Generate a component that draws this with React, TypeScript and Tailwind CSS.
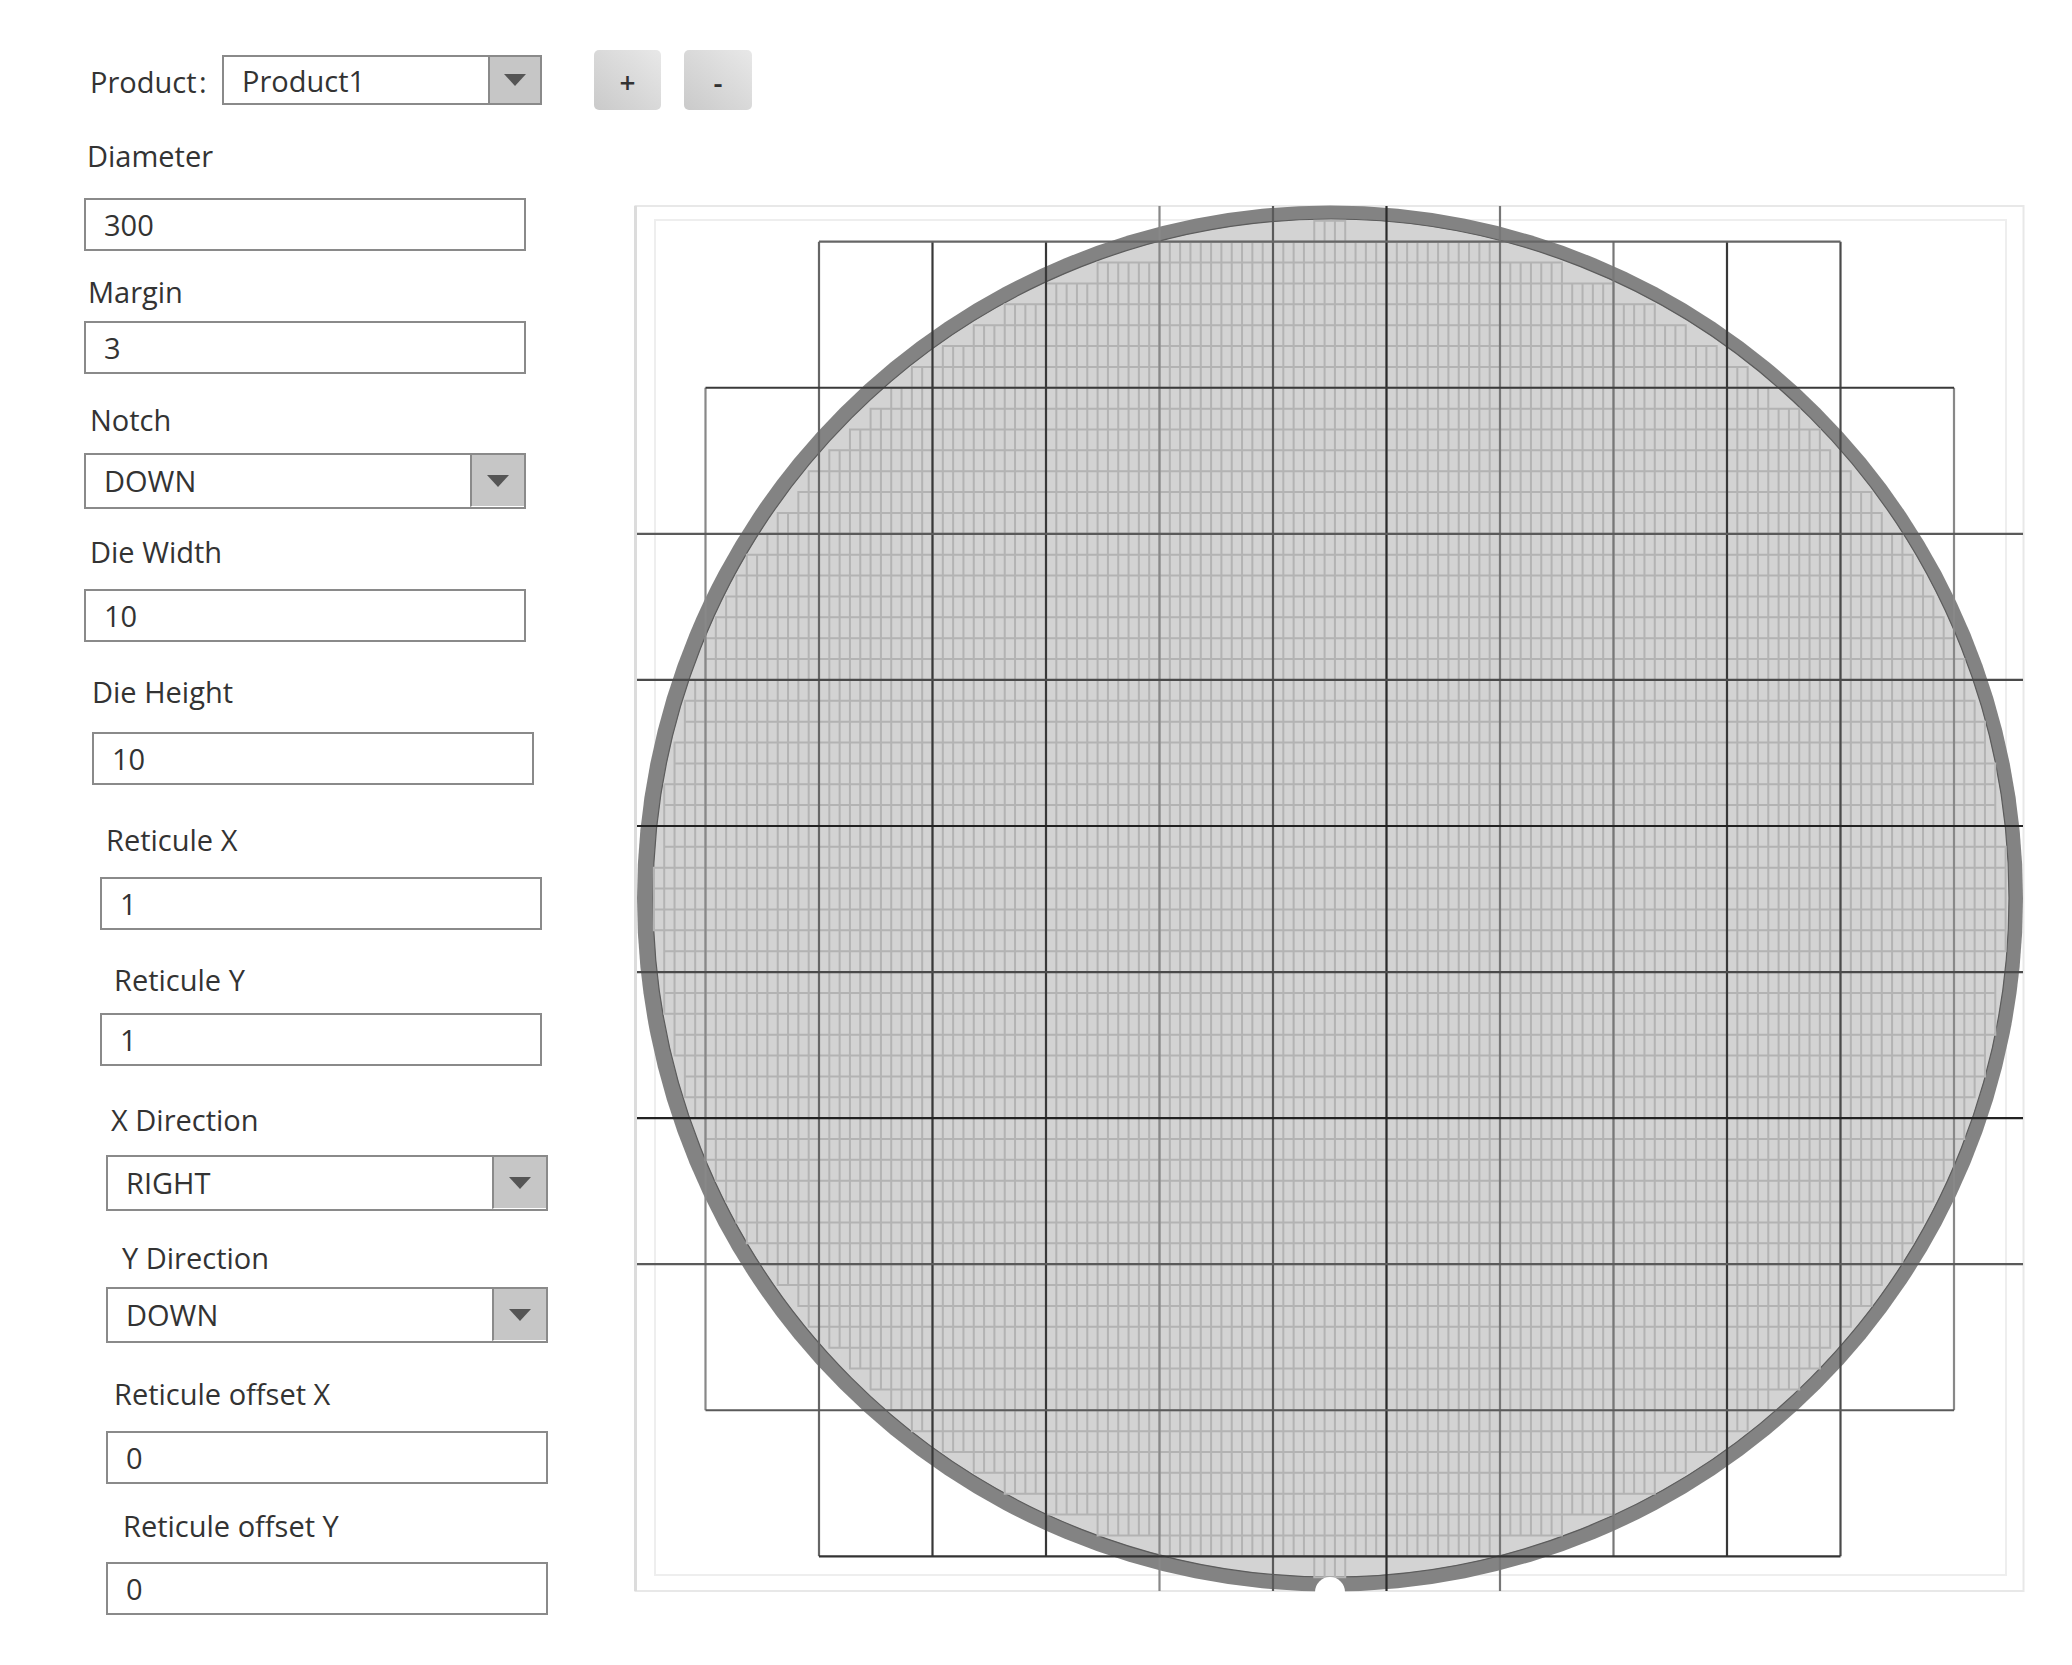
const DX = 113.5;
const DY = 146.07;
const X0 = 819;
const Y0 = 241.7;
const fx = DX / 11;
const fy = DY / 7;
const CX = 1331;
const CY = 899;

function finePath() {
  let d = "";
  for (let i = -30; i <= 130; i++) {
    for (let j = -10; j <= 80; j++) {
      const x = X0 + i * fx;
      const y = Y0 + j * fy;
      const corners = [
        [x, y],
        [x + fx, y],
        [x, y + fy],
        [x + fx, y + fy],
      ];
      if (corners.every(([a, b]) => Math.hypot(a - CX, b - CY) <= 678.5)) {
        d += `M${x.toFixed(2)} ${y.toFixed(2)}h${fx.toFixed(2)}v${fy.toFixed(2)}h${(-fx).toFixed(2)}z`;
      }
    }
  }
  return d;
}

const xAt = (k: number) => X0 + k * DX;
const yAt = (k: number) => Y0 + k * DY;

const verticals: [number, number, number, string][] = [
  [-1, 1, 8, "#888888"],
  [0, 0, 9, "#666666"],
  [1, 0, 9, "#383838"],
  [2, 0, 9, "#383838"],
  [3, -1, 10, "#888888"],
  [4, -1, 10, "#5a5a5a"],
  [5, -1, 10, "#2a2a2a"],
  [6, -1, 10, "#777777"],
  [7, 0, 9, "#777777"],
  [8, 0, 9, "#383838"],
  [9, 0, 9, "#4a4a4a"],
  [10, 1, 8, "#888888"],
];

const horizontals: [number, number, number, string][] = [
  [0, 0, 9, "#666666"],
  [1, -1, 10, "#3a3a3a"],
  [2, -2, 11, "#5a5a5a"],
  [3, -2, 11, "#4a4a4a"],
  [4, -2, 11, "#222222"],
  [5, -2, 11, "#4a4a4a"],
  [6, -2, 11, "#222222"],
  [7, -2, 11, "#5a5a5a"],
  [8, -1, 10, "#5a5a5a"],
  [9, 0, 9, "#333333"],
];

function Wafer() {
  return (
    <svg viewBox="633 204 1395 1392" className="block w-[1395px] h-[1392px] blur-[0.6px]">
      <rect x="635.5" y="206" width="1388" height="1385" fill="#ffffff" stroke="#e8e8e8" strokeWidth="2" />
      <line x1="635.5" y1="206" x2="635.5" y2="1591" stroke="#dcdcdc" strokeWidth="3" />
      <rect x="655" y="220" width="1351" height="1355" fill="none" stroke="#eeeeee" strokeWidth="2" />
      <ellipse cx="1330" cy="898.5" rx="693" ry="693" fill="#838383" />
      <ellipse cx="1331" cy="898" rx="678" ry="679" fill="#d3d3d3" stroke="#5c5c5c" strokeWidth="1.2" />
      <path d={finePath()} fill="none" stroke="#b3b3b3" strokeWidth="2" />
      <circle cx="1330" cy="1592" r="15" fill="#ffffff" />
      {verticals.map(([k, a, b, c]) => (
        <line key={k} x1={xAt(k)} x2={xAt(k)} y1={a < 0 ? 206 : yAt(a)} y2={b > 9 ? 1591 : yAt(b)} stroke={c} strokeWidth="2.2" />
      ))}
      {horizontals.map(([k, a, b, c]) => (
        <line key={k} y1={yAt(k)} y2={yAt(k)} x1={a < -1 ? 637 : xAt(a)} x2={b > 10 ? 2023 : xAt(b)} stroke={c} strokeWidth="2.2" />
      ))}
    </svg>
  );
}

function Arrow() {
  return (
    <svg width="22" height="12" viewBox="0 0 22 12" className="block">
      <path d="M0 0H22L11 12Z" fill="#555555" />
    </svg>
  );
}

function Input({ value }: { value: string }) {
  return (
    <div className="h-[53px] w-[442px] border-2 border-[#8a8a8a] bg-white pl-[18px] leading-[49px]">{value}</div>
  );
}

function Select({ value }: { value: string }) {
  return (
    <div className="flex h-[56px] w-[442px] border-2 border-[#8a8a8a] bg-white">
      <div className="flex-1 pl-[18px] leading-[52px]">{value}</div>
      <div className="flex w-[54px] items-center justify-center border-b border-l-2 border-b-white border-l-[#8a8a8a] bg-[#c6c6c6]">
        <Arrow />
      </div>
    </div>
  );
}

function Label({ children, className }: { children: string; className: string }) {
  return <div className={`h-[36px] whitespace-nowrap leading-[36px] ${className}`}>{children}</div>;
}

export default function App() {
  return (
    <div className="flex h-[1665px] w-[2072px] items-start overflow-hidden bg-white font-['Open_Sans','Noto_Sans',sans-serif] text-[29px] text-[#333333]">
      <div className="w-[633px] shrink-0 pt-[50px]">
        <div className="flex items-start">
          <div className="ml-[90px] mt-[14px] h-[36px] w-[132px] shrink-0 whitespace-nowrap leading-[36px] [word-spacing:-5px]">Product :</div>
          <div className="mt-[5px] flex h-[50px] w-[320px] shrink-0 border-2 border-[#8a8a8a] bg-white">
            <div className="flex-1 pl-[18px] leading-[48px]">Product1</div>
            <div className="flex w-[52px] items-center justify-center border-l-2 border-[#8a8a8a] bg-[#c6c6c6]">
              <Arrow />
            </div>
          </div>
          <div className="ml-[52px] flex h-[60px] w-[67px] shrink-0 items-center justify-center rounded-[5px] bg-gradient-to-tr from-[#cacaca] to-[#e8e8e8] pt-[4px] text-[28px] font-semibold">+</div>
          <div className="ml-[23px] flex h-[60px] w-[68px] shrink-0 items-center justify-center rounded-[5px] bg-gradient-to-tr from-[#cacaca] to-[#e8e8e8] pt-[4px] text-[28px] font-semibold">-</div>
        </div>
        <Label className="ml-[87px] mt-[28px]">Diameter</Label>
        <div className="ml-[84px] mt-[24px]"><Input value="300" /></div>
        <Label className="ml-[88px] mt-[23px]">Margin</Label>
        <div className="ml-[84px] mt-[11px]"><Input value="3" /></div>
        <Label className="ml-[90px] mt-[28px]">Notch</Label>
        <div className="ml-[84px] mt-[15px]"><Select value="DOWN" /></div>
        <Label className="ml-[90px] mt-[25px]">Die Width</Label>
        <div className="ml-[84px] mt-[19px]"><Input value="10" /></div>
        <Label className="ml-[92px] mt-[32px]">Die Height</Label>
        <div className="ml-[92px] mt-[22px]"><Input value="10" /></div>
        <Label className="ml-[106px] mt-[37px]">Reticule X</Label>
        <div className="ml-[100px] mt-[19px]"><Input value="1" /></div>
        <Label className="ml-[114px] mt-[32px]">Reticule Y</Label>
        <div className="ml-[100px] mt-[15px]"><Input value="1" /></div>
        <Label className="ml-[111px] mt-[36px]">X Direction</Label>
        <div className="ml-[106px] mt-[17px]"><Select value="RIGHT" /></div>
        <Label className="ml-[122px] mt-[29px]">Y Direction</Label>
        <div className="ml-[106px] mt-[11px]"><Select value="DOWN" /></div>
        <Label className="ml-[114px] mt-[33px]">Reticule offset X</Label>
        <div className="ml-[106px] mt-[19px]"><Input value="0" /></div>
        <Label className="ml-[123px] mt-[24px]">Reticule offset Y</Label>
        <div className="ml-[106px] mt-[18px]"><Input value="0" /></div>
      </div>
      <div className="mt-[204px] shrink-0">
        <Wafer />
      </div>
    </div>
  );
}
